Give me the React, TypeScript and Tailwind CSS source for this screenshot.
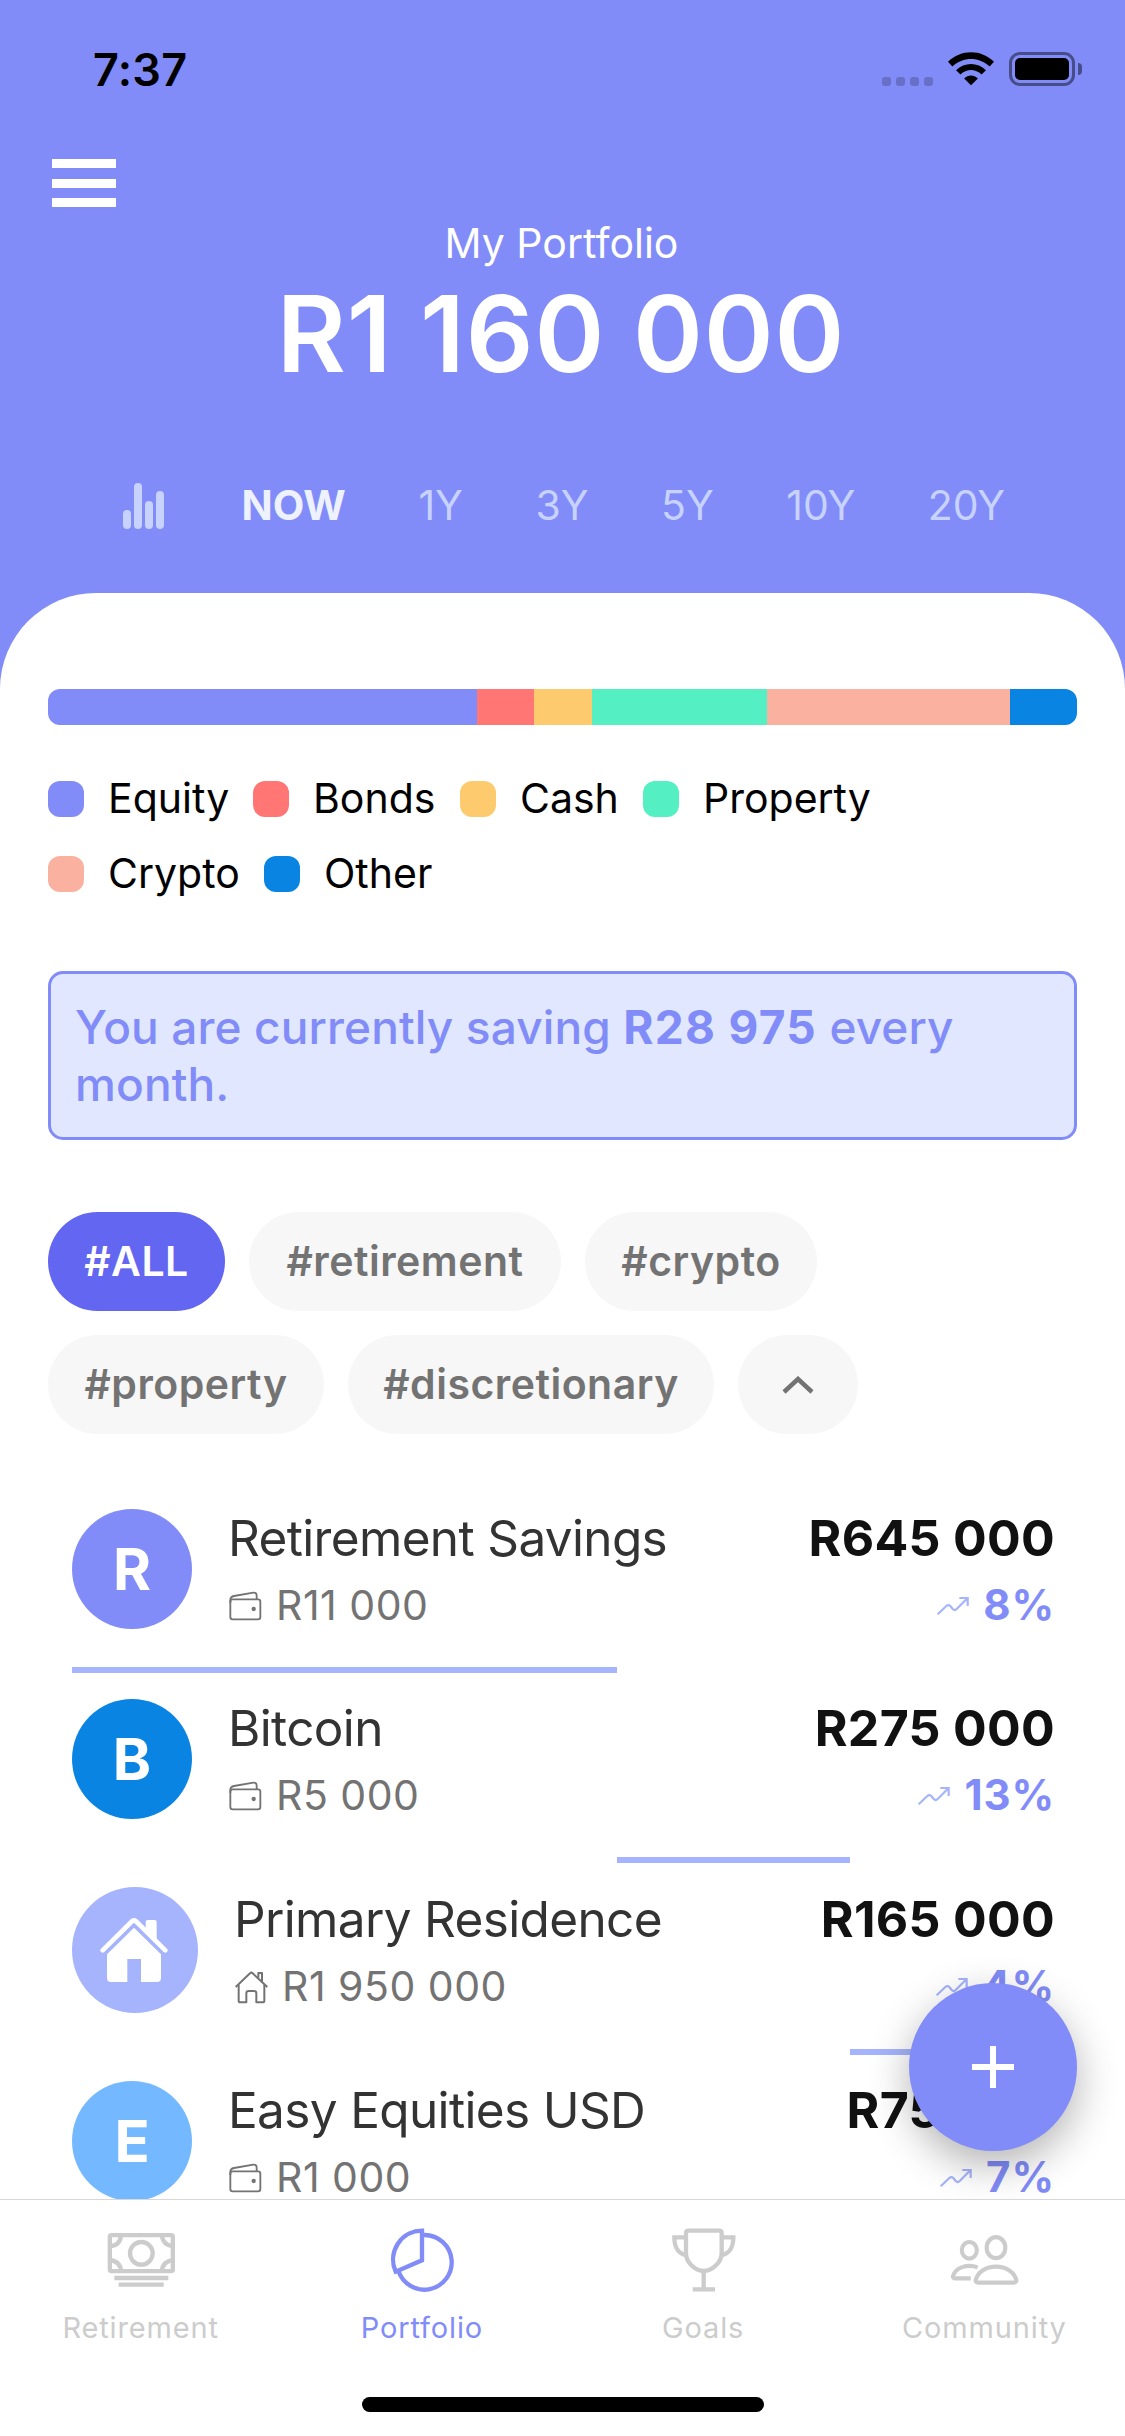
import React from 'react';
import clsx from 'clsx';

interface Holding {
  name: string;
  kind: 'fund' | 'property';
  initial: string;
  color: string;
  amount: string;
  value: number;
  contribution: string;
  growth: string;
}

const TOTAL = 1160000;

const holdings: Holding[] = [
  { name: 'Retirement Savings', kind: 'fund', initial: 'R', color: 'bg-[#818cf8]', amount: 'R645 000', value: 645000, contribution: 'R11 000', growth: '8%' },
  { name: 'Bitcoin', kind: 'fund', initial: 'B', color: 'bg-[#0984e3]', amount: 'R275 000', value: 275000, contribution: 'R5 000', growth: '13%' },
  { name: 'Primary Residence', kind: 'property', initial: '', color: 'bg-[#a5b4fc]', amount: 'R165 000', value: 165000, contribution: 'R1 950 000', growth: '4%' },
  { name: 'Easy Equities USD', kind: 'fund', initial: 'E', color: 'bg-[#74b9ff]', amount: 'R75 000', value: 75000, contribution: 'R1 000', growth: '7%' },
];

const allocation = [
  { label: 'Equity', color: 'bg-[#818cf8]', share: 429, itemWidth: 'w-[205px]' },
  { label: 'Bonds', color: 'bg-[#ff7675]', share: 57, itemWidth: 'w-[207px]' },
  { label: 'Cash', color: 'bg-[#fdcb6e]', share: 58, itemWidth: 'w-[183px]' },
  { label: 'Property', color: 'bg-[#55efc4]', share: 175, itemWidth: 'w-[300px]' },
  { label: 'Crypto', color: 'bg-[#fab1a0]', share: 243, itemWidth: 'w-[216px]' },
  { label: 'Other', color: 'bg-[#0984e3]', share: 67, itemWidth: 'w-[200px]' },
];

const tags = [
  { label: '#ALL', width: 'w-[177px]' },
  { label: '#retirement', width: 'w-[312px]' },
  { label: '#crypto', width: 'w-[232px]' },
  { label: '#property', width: 'w-[276px]' },
  { label: '#discretionary', width: 'w-[366px]' },
];

const periods = ['1Y', '3Y', '5Y', '10Y', '20Y'];

const StatusBar: React.FC = () => (
  <div className="flex h-[138px] shrink-0 items-center justify-between pl-[93px] pr-[43px] text-black">
    <span className="text-[45px] font-semibold leading-none tracking-[0.3px]">7:37</span>
    <div className="flex items-center">
      <div className="mt-6 mr-[15px] flex gap-[5px]">
        {[0, 1, 2, 3].map(i => (
          <span key={i} className="h-[9px] w-[9px] rounded-[3px] bg-black/20" />
        ))}
      </div>
      <svg className="mr-[15px] h-[34px] w-[46px]" viewBox="0 0 137 101" fill="currentColor">
        <path d="M0 29C38 -9 99 -9 137 29L124 43C93 13 44 13 13 43Z" />
        <path d="M24 54C49 29 88 29 113 54L100 67C82 49 55 49 37 67Z" />
        <path d="M48 79C60 67 77 67 89 79L68.500 99Z" />
      </svg>
      <div className="flex items-center">
        <div className="h-[34px] w-[66px] rounded-[11px] border-[3px] border-black/45 p-[3px]">
          <div className="h-full w-full rounded-[5px] bg-black" />
        </div>
        <div className="ml-[3px] h-3 w-1 rounded-r-full bg-black/45" />
      </div>
    </div>
  </div>
);

const WalletIcon: React.FC = () => (
  <svg className="h-[30px] w-[33px]" viewBox="0 0 99 90" fill="none" stroke="currentColor" strokeWidth="5.500">
    <rect x="4" y="25" width="90" height="60" rx="7" />
    <path d="M4 36V27Q4 17 15 15L73 5Q83 4 83 14V24" />
    <circle cx="74" cy="54" r="6.500" fill="currentColor" stroke="none" />
  </svg>
);

const HouseOutlineIcon: React.FC = () => (
  <svg className="h-[33px] w-[33px]" viewBox="0 0 99 99" fill="none" stroke="currentColor" strokeWidth="6" strokeLinejoin="round">
    <path d="M2 48L45 7Q49 3 53 7L97 48" />
    <path d="M11 41V89Q11 94 16 94H34V67Q34 60 41 60H57Q64 60 64 67V94H83Q88 94 88 89V41M70 20V6H81V32" />
  </svg>
);

const HouseSolidIcon: React.FC = () => (
  <svg className="mr-0.5 h-[66px] w-[68px]" viewBox="0 0 204 198" fill="none">
    <path d="M8 100L96 13Q102 8 108 13L196 100" stroke="#fff" strokeWidth="14" strokeLinecap="round" />
    <path d="M137 40V15Q137 9 143 9H164Q170 9 170 15V72Z" fill="#fff" />
    <path d="M102 32L183 112V183Q183 195 171 195H123V126H82V195H33Q21 195 21 183V112Z" fill="#fff" />
  </svg>
);

const TrendIcon: React.FC = () => (
  <svg className="h-5 w-8 text-[#a5b4fc]" viewBox="0 0 96 60" fill="none" stroke="currentColor" strokeWidth="6.500">
    <path d="M2 55L28 30Q34 25 40 30L47 39Q53 45 59 39L91 7M67 6H92V30" />
  </svg>
);

const HoldingRow: React.FC<{ holding: Holding; start: number }> = ({ holding, start }) => {
  const isProperty = holding.kind === 'property';

  return (
    <div>
      <div className={clsx('mb-3 flex items-center', isProperty ? 'h-[174px]' : 'h-[172px]')}>
        <div
          className={clsx(
            'mr-9 flex shrink-0 items-center justify-center rounded-full text-[58px] font-bold leading-none text-white',
            holding.color,
            isProperty ? 'h-[126px] w-[126px]' : 'h-[120px] w-[120px]'
          )}
        >
          {isProperty ? <HouseSolidIcon /> : holding.initial}
        </div>
        <div className="flex-1">
          <div className="text-[49.5px] leading-[62px] tracking-[-0.65px] text-[#333333]">{holding.name}</div>
          <div className="mt-3 flex h-[50px] items-center gap-[14px] pl-px text-[41px] tracking-[0.5px] text-[#737373]">
            {isProperty ? <HouseOutlineIcon /> : <WalletIcon />}
            <span>{holding.contribution}</span>
          </div>
        </div>
        <div className="-mr-0.5 flex flex-col items-end">
          <div className="text-[50px] font-bold leading-[62px] tracking-[0.3px] text-[#111111]">{holding.amount}</div>
          <div className="mt-3 flex h-[50px] items-center gap-[14px] text-[42px] font-bold tracking-[0.9px] text-[#818cf8]">
            <TrendIcon />
            <span className="pb-[3px]">{holding.growth}</span>
          </div>
        </div>
      </div>
      <div
        className="h-[6px] bg-[#a5b4fc]"
        style={{
          marginLeft: `${(start / TOTAL) * 100}%`,
          width: `${(holding.value / TOTAL) * 100}%`,
        }}
      />
    </div>
  );
};

const CashIcon: React.FC = () => (
  <svg className="h-[72px] w-[72px]" viewBox="0 0 216 216" fill="none" stroke="currentColor" strokeWidth="13">
    <rect x="14.500" y="33.500" width="189" height="108" rx="5" />
    <circle cx="109" cy="88" r="34" />
    <path d="M14 67Q46 64 48 34M170 34Q174 64 204 67M14 108Q46 112 48 141M170 141Q174 112 204 108" />
    <path d="M28 162H190M41 182H176" />
  </svg>
);

const PieIcon: React.FC = () => (
  <svg className="h-[72px] w-[72px]" viewBox="0 0 216 216" fill="none" stroke="currentColor" strokeWidth="13">
    <path d="M108 20A87 87 0 0 0 29 143L108 109Z" />
    <path d="M108 33Q112 33 116 33A82 82 0 1 1 37 140" />
  </svg>
);

const TrophyIcon: React.FC = () => (
  <svg className="h-[72px] w-[72px]" viewBox="0 0 216 216" fill="none" stroke="currentColor" strokeWidth="13">
    <path d="M57 27Q57 20 64 20H157Q164 20 164 27V88C164 118 132 141 110 141S57 118 57 88Z" />
    <path d="M57 40H22C22 70 35 90 57 93M164 40H199C199 70 186 90 164 93" />
    <path d="M110 141V196M77 196H144" />
  </svg>
);

const PeopleIcon: React.FC = () => (
  <svg className="h-[72px] w-[72px]" viewBox="0 0 216 216" fill="none" stroke="currentColor" strokeWidth="12.500">
    <ellipse cx="144" cy="71" rx="28" ry="31.500" />
    <ellipse cx="64" cy="79" rx="22.500" ry="25" />
    <path d="M144 128C114 128 90 144 83 168Q82 175 91 176H197Q206 175 205 168C198 144 174 128 144 128Z" />
    <path d="M89 130C57 118 22 132 15 156Q14 163 22 163H68" />
  </svg>
);

const tabs = [
  { label: 'Retirement', icon: <CashIcon />, active: false },
  { label: 'Portfolio', icon: <PieIcon />, active: true },
  { label: 'Goals', icon: <TrophyIcon />, active: false },
  { label: 'Community', icon: <PeopleIcon />, active: false },
];

export default function App() {
  let running = 0;

  return (
    <div className="relative flex h-[2436px] w-[1125px] flex-col overflow-hidden bg-[#818cf8] font-['Inter',sans-serif]">
      {/* Header */}
      <header className="flex h-[593px] shrink-0 flex-col text-white">
        <StatusBar />
        <button className="mt-[21px] ml-[52px] flex h-12 w-16 flex-col justify-between">
          <span className="h-[9px] w-full bg-white" />
          <span className="h-[9px] w-full bg-white" />
          <span className="h-[9px] w-full bg-white" />
        </button>
        <div className="mt-[11px] pr-0.5 text-center text-[41px] leading-[50px]">My Portfolio</div>
        <div className="mt-[2px] pr-[3px] text-center text-[106px] font-semibold leading-[128px] tracking-[0.9px]">R1 160 000</div>
        <div className="mt-[83px] flex h-[50px] items-center gap-[72.5px] pl-[123px] text-[41px] text-[#c7d2fe]">
          <div className="mr-[5px] flex h-[46px] items-end gap-[3px]">
            <span className="h-[19px] w-2 rounded-full bg-[#c7d2fe]" />
            <span className="h-[46px] w-2 rounded-full bg-[#c7d2fe]" />
            <span className="h-[28px] w-2 rounded-full bg-[#c7d2fe]" />
            <span className="h-[38px] w-2 rounded-full bg-[#c7d2fe]" />
          </div>
          <span className="font-bold text-[#eef2ff]">NOW</span>
          {periods.map(period => (
            <span key={period}>{period}</span>
          ))}
        </div>
      </header>

      {/* Sheet */}
      <main className="min-h-0 flex-1 overflow-hidden rounded-t-[96px] bg-white px-12 pt-24">
        <div className="flex h-9 overflow-hidden rounded-[12px]">
          {allocation.map(item => (
            <div key={item.label} className={item.color} style={{ width: `${(item.share / 1029) * 100}%` }} />
          ))}
        </div>
        <div className="mt-14 flex flex-wrap gap-y-[39px]">
          {allocation.map(item => (
            <div key={item.label} className={clsx('flex h-9 items-center gap-6', item.itemWidth)}>
              <span className={clsx('h-9 w-9 shrink-0 rounded-[12px]', item.color)} />
              <span className="pb-px text-[41px] leading-none text-black">{item.label}</span>
            </div>
          ))}
        </div>

        <div className="mt-[79px] h-[169px] rounded-[15px] border-[3px] border-[#818cf8] bg-[#e0e7ff] px-6 pt-[25px] text-[46px] font-medium leading-[57px] tracking-[0.12px] text-[#818cf8]">
          You are currently saving <span className="font-bold tracking-[1.3px]">R28 975</span> every month.
        </div>

        <div className="mt-[72px] flex flex-wrap gap-6">
          {tags.map((tag, index) => (
            <button
              key={tag.label}
              className={clsx(
                'flex h-[99px] items-center justify-center rounded-full text-[41px] font-semibold tracking-[0.5px]',
                tag.width,
                index === 0 ? 'bg-[#6366f1] text-white' : 'bg-[#f7f7f7] text-[#737373]'
              )}
            >
              {tag.label}
            </button>
          ))}
          <button className="flex h-[99px] w-[120px] items-center justify-center rounded-full bg-[#f7f7f7] text-[#737373]">
            <svg className="h-[18px] w-8" viewBox="0 0 32 18" fill="none" stroke="currentColor" strokeWidth="4.500">
              <path d="M2 16L16 3L30 16" />
            </svg>
          </button>
        </div>

        <div className="mx-6 mt-[49px]">
          {holdings.map(holding => {
            const start = running;
            running += holding.value;
            return <HoldingRow key={holding.name} holding={holding} start={start} />;
          })}
        </div>
      </main>

      <button className="absolute top-[1983px] left-[909px] flex h-[168px] w-[168px] items-center justify-center rounded-full bg-[#818cf8] shadow-[0_14px_42px_rgba(0,0,0,0.3)]">
        <svg className="h-[42px] w-[42px]" viewBox="0 0 42 42" stroke="#fff" strokeWidth="6">
          <path d="M21 0V42M0 21H42" />
        </svg>
      </button>

      {/* Tab bar */}
      <nav className="relative flex h-[237px] shrink-0 flex-col border-t border-[#d8d8d8] bg-white">
        <div className="grid grid-cols-4 pt-6">
          {tabs.map(tab => (
            <div
              key={tab.label}
              className={clsx('flex flex-col items-center', tab.active ? 'text-[#818cf8]' : 'text-[#cccccc]')}
            >
              {tab.icon}
              <span className="mt-[14px] text-[29px] leading-9 tracking-[0.85px]">{tab.label}</span>
            </div>
          ))}
        </div>
        <div className="mx-auto mt-[51px] h-[15px] w-[402px] rounded-full bg-black" />
      </nav>
    </div>
  );
}
